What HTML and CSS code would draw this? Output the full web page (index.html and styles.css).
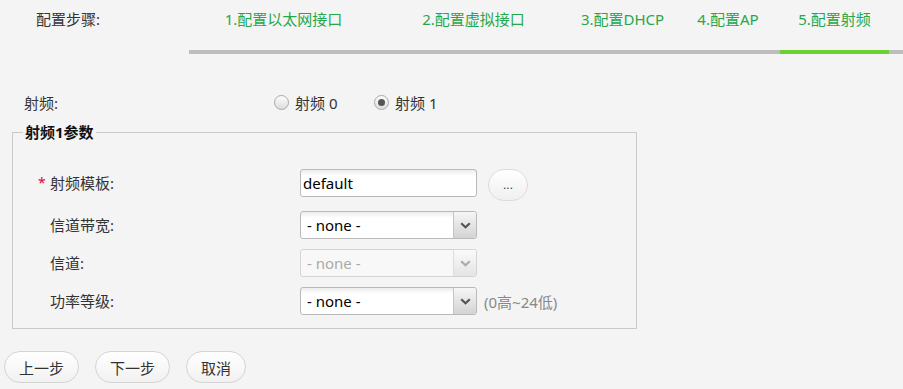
FILE: index.html
```html
<!DOCTYPE html>
<html lang="zh-CN">
<head>
    <meta charset="UTF-8">
    <meta name="viewport" content="width=device-width, initial-scale=1.0">
    <title>配置射频</title>
    <link rel="stylesheet" href="styles.css">
</head>
<body>
    <div class="wizard">
        <div class="wizard-title">配置步骤:</div>
        <div class="wizard-steps">
            <div class="step">1.配置以太网接口</div>
            <div class="step">2.配置虚拟接口</div>
            <div class="step">3.配置DHCP</div>
            <div class="step">4.配置AP</div>
            <div class="step active">5.配置射频</div>
        </div>
    </div>

    <div class="radio-row">
        <div class="radio-label">射频:</div>
        <label class="radio"><span class="radio-dot"></span>射频 0</label>
        <label class="radio"><span class="radio-dot checked"></span>射频 1</label>
    </div>

    <fieldset class="params">
        <legend>射频1参数</legend>
        <div class="form-row tall">
            <div class="form-label"><span class="star">*</span>射频模板:</div>
            <input class="text-input" type="text" value="default">
            <button class="dots-btn">...</button>
        </div>
        <div class="form-row">
            <div class="form-label"><span class="star"></span>信道带宽:</div>
            <div class="select">
                <div class="select-value">- none -</div>
                <div class="select-arrow">
                    <svg width="11" height="7" viewBox="0 0 11 7"><path d="M1.2 1.2 L5.5 5.3 L9.8 1.2" fill="none" stroke="#555" stroke-width="2.2"/></svg>
                </div>
            </div>
        </div>
        <div class="form-row">
            <div class="form-label"><span class="star"></span>信道:</div>
            <div class="select disabled">
                <div class="select-value">- none -</div>
                <div class="select-arrow">
                    <svg width="11" height="7" viewBox="0 0 11 7"><path d="M1.2 1.2 L5.5 5.3 L9.8 1.2" fill="none" stroke="#aaa" stroke-width="2.2"/></svg>
                </div>
            </div>
        </div>
        <div class="form-row">
            <div class="form-label"><span class="star"></span>功率等级:</div>
            <div class="select">
                <div class="select-value">- none -</div>
                <div class="select-arrow">
                    <svg width="11" height="7" viewBox="0 0 11 7"><path d="M1.2 1.2 L5.5 5.3 L9.8 1.2" fill="none" stroke="#555" stroke-width="2.2"/></svg>
                </div>
            </div>
            <span class="hint">(0高~24低)</span>
        </div>
    </fieldset>

    <div class="actions">
        <button class="btn">上一步</button>
        <button class="btn">下一步</button>
        <button class="btn">取消</button>
    </div>
</body>
</html>
```

FILE: styles.css
```css
body {
    margin: 0;
    background-color: #f4f4f4;
    font-family: "Noto Sans", "Noto Sans CJK SC", sans-serif;
    font-size: 15px;
    color: #333;
}
.wizard {
    display: flex;
    height: 54px;
}
.wizard-title {
    width: 153px;
    padding-left: 36px;
    padding-top: 9px;
    line-height: 20px;
}
.wizard-steps {
    flex: 1;
    display: flex;
    height: 50px;
    border-bottom: 4px solid #bdbdbd;
}
.step {
    height: 41px;
    padding-top: 9px;
    line-height: 20px;
    text-align: center;
    color: #25a84a;
    border-bottom: 4px solid transparent;
}
.step:nth-child(1) { width: 189px; }
.step:nth-child(2) { width: 191px; }
.step:nth-child(3) { width: 107px; }
.step:nth-child(4) { width: 104px; }
.step:nth-child(5) { width: 109px; }
.step.active {
    border-bottom-color: #6cd032;
}
.radio-row {
    display: flex;
    align-items: center;
    height: 30px;
    margin-top: 33px;
    padding-left: 24px;
}
.radio-label {
    width: 250px;
}
.radio {
    display: flex;
    align-items: center;
    width: 100px;
}
.radio-dot {
    width: 15px;
    height: 15px;
    box-sizing: border-box;
    border-radius: 50%;
    border: 1px solid #a9a9a9;
    background: linear-gradient(#fdfdfd, #dcdcdc);
    margin-right: 6px;
    display: flex;
    align-items: center;
    justify-content: center;
}
.radio-dot.checked::after {
    content: "";
    width: 7px;
    height: 7px;
    border-radius: 50%;
    background-color: #555;
}
.params {
    box-sizing: border-box;
    width: 625px;
    margin: 5px 0 0 12px;
    padding: 27px 0 13px 0;
    border: 1px solid #cacaca;
    min-width: 0;
}
.params legend {
    margin-left: 10px;
    padding: 0 2px;
    font-weight: bold;
    line-height: 20px;
    color: #111;
}
.form-row {
    display: flex;
    align-items: center;
    height: 28px;
    padding-left: 25px;
    margin-top: 10px;
}
.form-row.tall {
    height: 32px;
    align-items: flex-start;
    margin-top: 0;
    margin-bottom: 2px;
}
.form-label {
    width: 262px;
    display: flex;
    line-height: 28px;
}
.star {
    width: 12px;
    color: #e4003a;
    font-size: 14px;
}
.text-input {
    box-sizing: border-box;
    width: 177px;
    height: 28px;
    margin: 0;
    padding: 0 2px;
    border: 1px solid #b9b9b9;
    border-radius: 3px;
    background: linear-gradient(#ececec, #fff 6px);
    font-family: "Noto Sans", "Noto Sans CJK SC", sans-serif;
    font-size: 15px;
    color: #000;
}
.dots-btn {
    width: 40px;
    height: 32px;
    margin-left: 11px;
    border: 1px solid #dcdcdc;
    border-radius: 16px;
    background: linear-gradient(#fff, #f0f0f0);
    font-size: 12px;
    color: #333;
    padding: 0;
}
.select {
    box-sizing: border-box;
    display: flex;
    width: 177px;
    height: 28px;
    border: 1px solid #b9b9b9;
    border-radius: 3px;
    background: linear-gradient(#ececec, #fff 6px);
    overflow: hidden;
}
.select-value {
    flex: 1;
    padding-left: 6px;
    line-height: 26px;
    color: #000;
}
.select-arrow {
    width: 22px;
    border-left: 1px solid #c4c4c4;
    background: linear-gradient(#f6f6f6, #d3d3d3);
    display: flex;
    align-items: center;
    justify-content: center;
}
.select.disabled {
    border-color: #d4d4d4;
    background: #f8f8f8;
}
.select.disabled .select-value {
    color: #aaa;
}
.select.disabled .select-arrow {
    border-left-color: #ddd;
    background: linear-gradient(#fafafa, #e4e4e4);
}
.hint {
    margin-left: 7px;
    color: #888;
}
.actions {
    display: flex;
    gap: 16px;
    margin-top: 22px;
    padding-left: 4px;
}
.btn {
    height: 32px;
    padding: 0 14px;
    border: 1px solid #d4d4d4;
    border-radius: 16px;
    background: linear-gradient(#fff, #f1f1f1);
    font-family: "Noto Sans", "Noto Sans CJK SC", sans-serif;
    font-size: 15px;
    color: #333;
}
```
